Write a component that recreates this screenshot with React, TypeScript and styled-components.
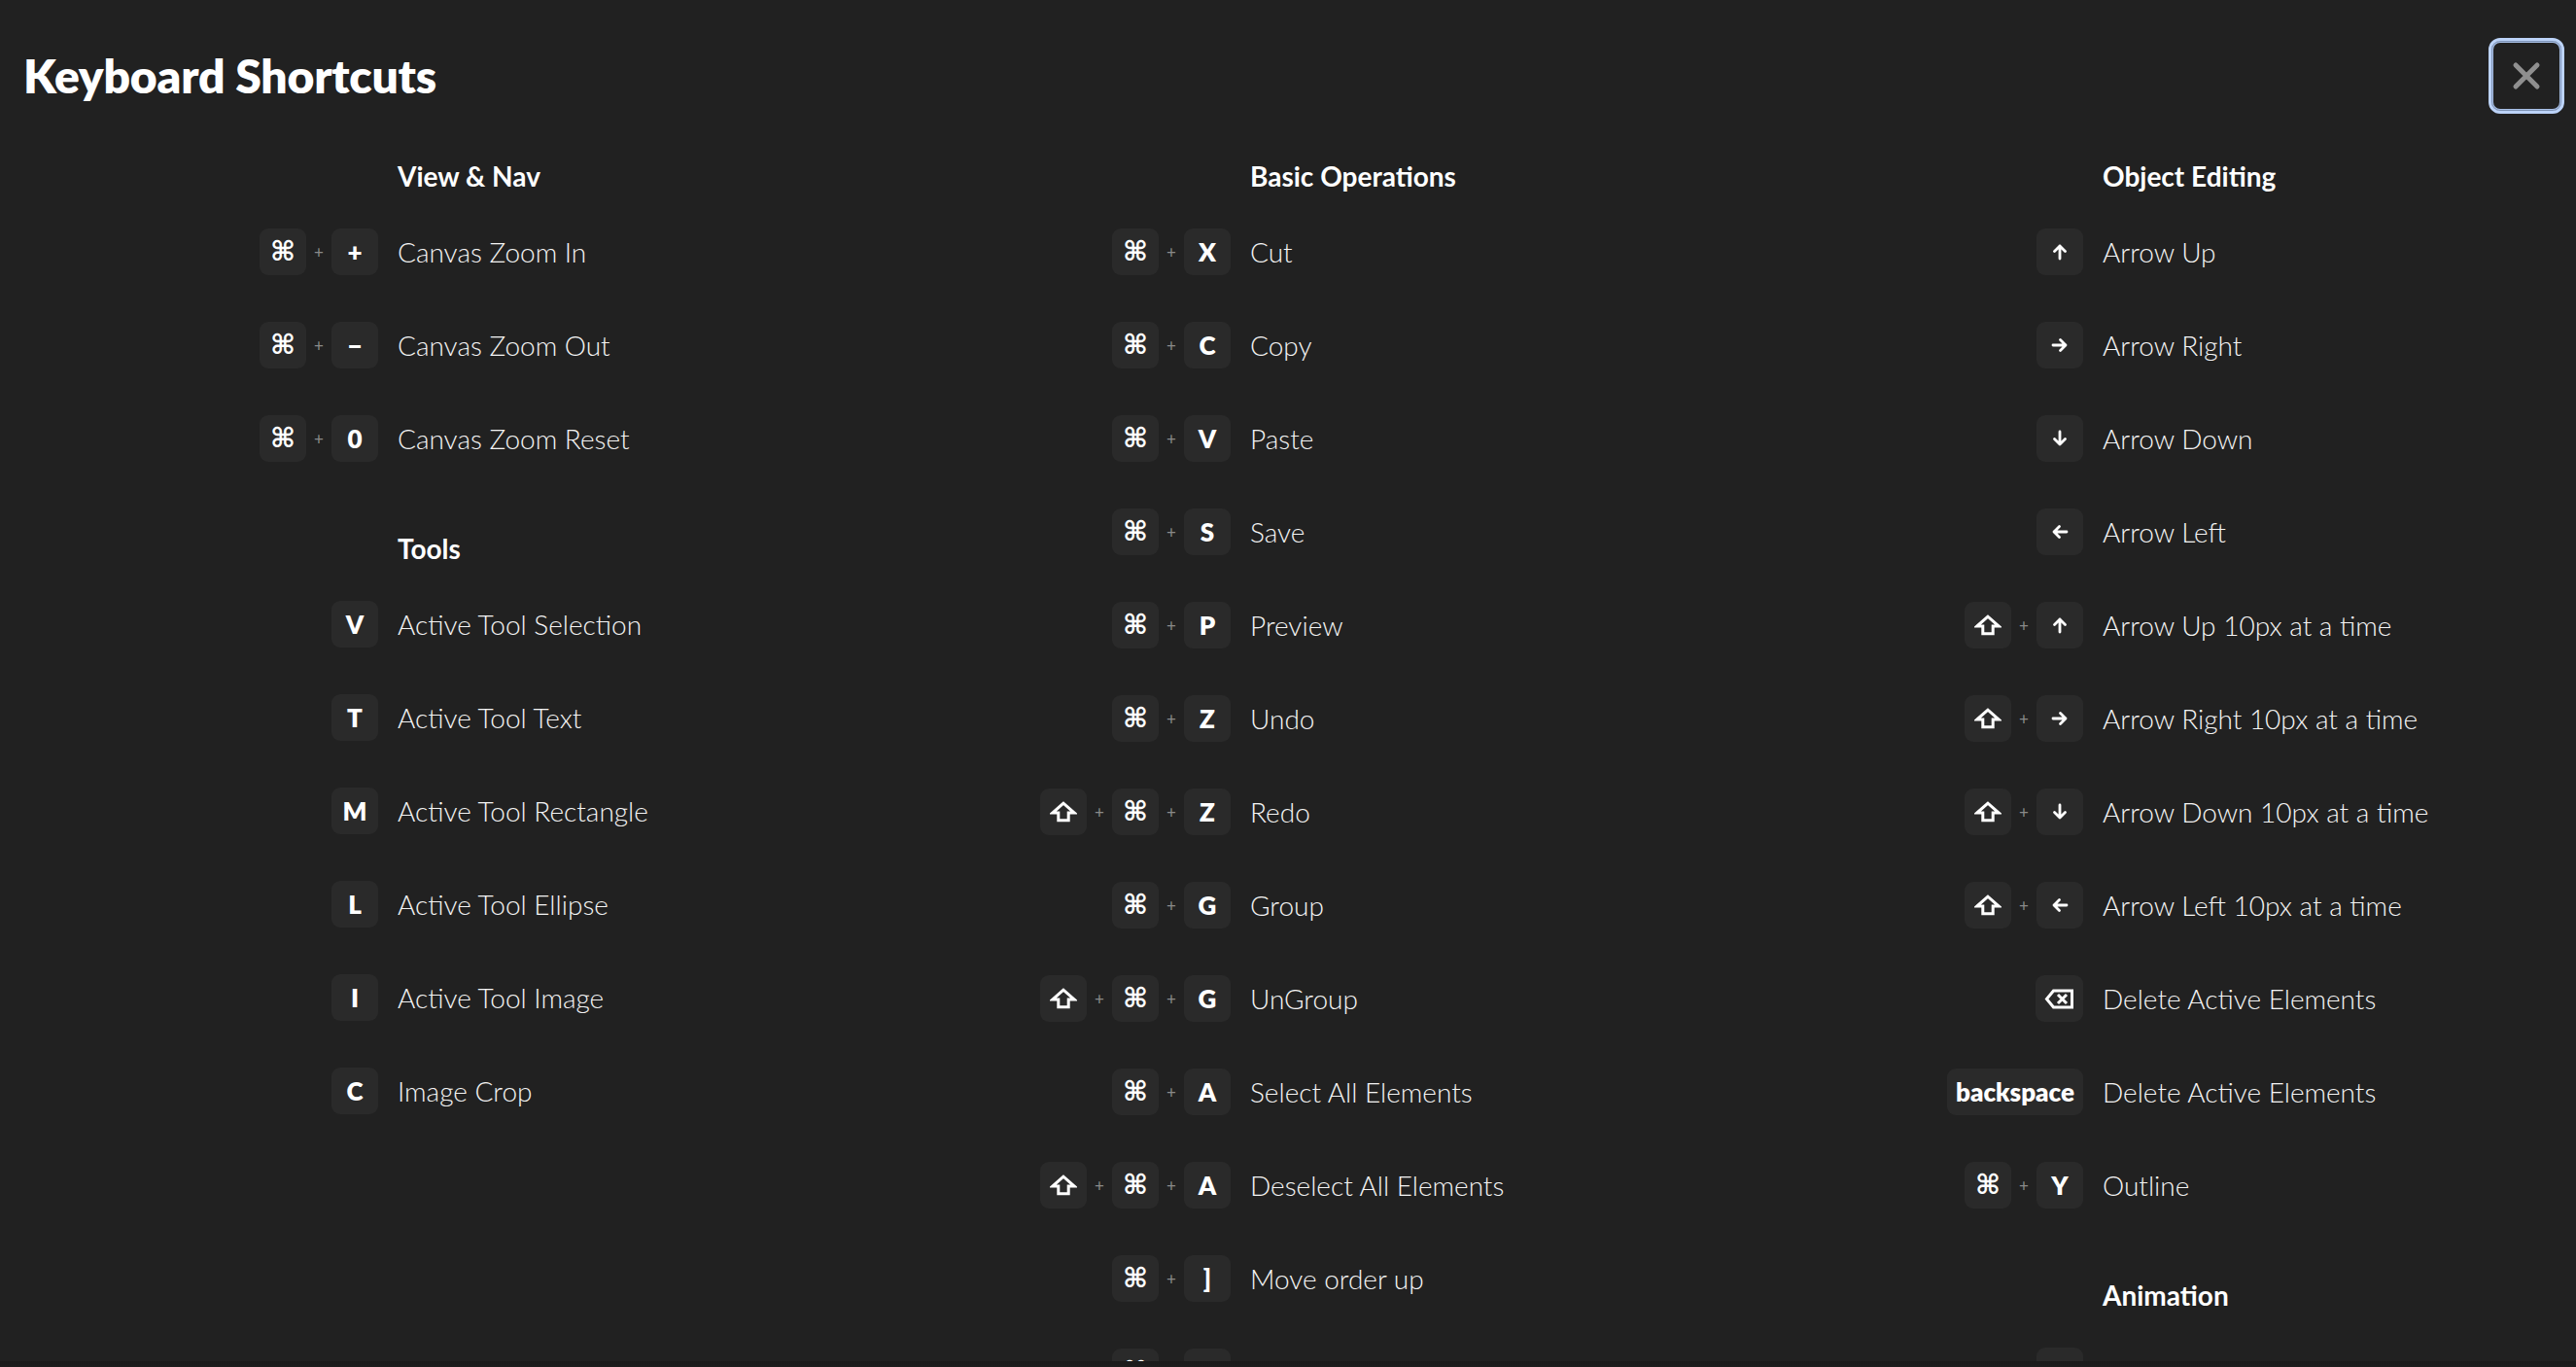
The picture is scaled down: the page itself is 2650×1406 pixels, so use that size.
import React from "react";
import styled, { createGlobalStyle } from "styled-components";

const GlobalStyle = createGlobalStyle`
  html, body {
    margin: 0;
    padding: 0;
    background: #212121;
    overflow: hidden;
  }
  * { box-sizing: border-box; }
`;

const Page = styled.div`
  width: 2650px;
  height: 1406px;
  background: #212121;
  font-family: Lato, "Noto Sans", sans-serif;
  color: #ffffff;
  display: flex;
  flex-direction: column;
`;

const Modal = styled.div`
  height: 1400px;
  overflow: hidden;
  display: flex;
  flex-direction: column;
`;

const BottomEdge = styled.div`
  height: 6px;
  background: linear-gradient(#1a1a1a, #1d1d1d);
`;

const Header = styled.header`
  display: flex;
  align-items: center;
  justify-content: space-between;
  padding: 39px 12px 0 24px;
`;

const Title = styled.h1`
  margin: 0;
  font-size: 48px;
  font-weight: 800;
  letter-spacing: -0.2px;
  line-height: 78px;
  color: #ffffff;
`;

const CloseButton = styled.button`
  width: 78px;
  height: 78px;
  border-radius: 12px;
  border: 3px solid #bcd3f8;
  box-shadow: inset 0 0 0 1px #7d92b5, inset 0 0 0 2px #a9c0e6;
  background: transparent;
  display: flex;
  align-items: center;
  justify-content: center;
  padding: 0;
  cursor: pointer;
`;

const Columns = styled.div`
  display: grid;
  grid-template-columns: repeat(3, 877px);
  padding-left: 20px;
  margin-top: 44px;
`;

const Column = styled.div`
  display: flex;
  flex-direction: column;
`;

const Section = styled.section`
  display: flex;
  flex-direction: column;
  & + & {
    margin-top: 45px;
  }
`;

const SectionTitle = styled.h2`
  margin: 0 0 10px 389px;
  height: 40px;
  line-height: 40px;
  font-size: 28px;
  font-weight: 700;
  color: #ffffff;
`;

const Row = styled.div`
  display: grid;
  grid-template-columns: 369px 1fr;
  column-gap: 20px;
  align-items: center;
  height: 96px;
`;

const Keys = styled.div`
  display: flex;
  justify-content: flex-end;
  align-items: center;
`;

const Key = styled.span<{ $wide?: boolean }>`
  min-width: 48px;
  height: 48px;
  padding: 0 ${(p) => (p.$wide ? "9px" : "0")};
  border-radius: 9px;
  background: #2a2a2a;
  display: inline-flex;
  align-items: center;
  justify-content: center;
  font-family: Lato, "Noto Sans", sans-serif;
  font-size: 26px;
  font-weight: 800;
  color: #ffffff;
  line-height: 1;
`;

const CmdGlyph = styled.span`
  font-family: "DejaVu Sans", sans-serif;
  font-weight: 700;
  font-size: 28px;
  line-height: 1;
`;

const Plus = styled.span`
  width: 26px;
  text-align: center;
  font-size: 17px;
  font-weight: 400;
  color: #8a8a8a;
`;

const Label = styled.span`
  font-size: 28px;
  font-weight: 300;
  color: #f4f4f4;
  white-space: nowrap;
`;

const ShiftIcon = () => (
  <svg width="28" height="22" viewBox="0 0 28 22" fill="none">
    <path
      d="M14 2.2 L2.8 12 H8.8 V19.8 H19.2 V12 H25.2 Z"
      stroke="#fff"
      strokeWidth="3"
      strokeLinejoin="miter"
    />
  </svg>
);

const ArrowIcon = ({ dir }: { dir: "up" | "right" | "down" | "left" }) => {
  const rot = { up: 0, right: 90, down: 180, left: 270 }[dir];
  return (
    <svg width="18" height="18" viewBox="0 0 18 18" fill="none">
      <g transform={`rotate(${rot} 9 9)`}>
        <path
          d="M9 16 V3 M3.5 8.5 L9 3 L14.5 8.5"
          stroke="#fff"
          strokeWidth="2.8"
          strokeLinecap="round"
          strokeLinejoin="round"
        />
      </g>
    </svg>
  );
};

const DeleteIcon = () => (
  <svg width="31" height="21" viewBox="0 0 31 21" fill="none">
    <path
      d="M9.5 2 H28.5 V19 H9.5 L2.5 10.5 Z"
      stroke="#fff"
      strokeWidth="3"
      strokeLinejoin="miter"
    />
    <path d="M14 6 L23 15 M23 6 L14 15" stroke="#fff" strokeWidth="3" />
  </svg>
);

const CloseIcon = () => (
  <svg width="30" height="30" viewBox="0 0 30 30" fill="none">
    <path
      d="M4 4 L26 26 M26 4 L4 26"
      stroke="#8f8f8f"
      strokeWidth="5"
      strokeLinecap="round"
    />
  </svg>
);

type Shortcut = { keys: string[]; label: string };
type SectionData = { title: string; rows: Shortcut[] };

const renderKey = (k: string) => {
  switch (k) {
    case "cmd":
      return (
        <Key>
          <CmdGlyph>⌘</CmdGlyph>
        </Key>
      );
    case "shift":
      return (
        <Key $wide>
          <ShiftIcon />
        </Key>
      );
    case "up":
    case "right":
    case "down":
    case "left":
      return (
        <Key>
          <ArrowIcon dir={k} />
        </Key>
      );
    case "del":
      return (
        <Key $wide>
          <DeleteIcon />
        </Key>
      );
    default:
      return <Key $wide={k.length > 1}>{k}</Key>;
  }
};

const columns: SectionData[][] = [
  [
    {
      title: "View & Nav",
      rows: [
        { keys: ["cmd", "+"], label: "Canvas Zoom In" },
        { keys: ["cmd", "−"], label: "Canvas Zoom Out" },
        { keys: ["cmd", "0"], label: "Canvas Zoom Reset" },
      ],
    },
    {
      title: "Tools",
      rows: [
        { keys: ["V"], label: "Active Tool Selection" },
        { keys: ["T"], label: "Active Tool Text" },
        { keys: ["M"], label: "Active Tool Rectangle" },
        { keys: ["L"], label: "Active Tool Ellipse" },
        { keys: ["I"], label: "Active Tool Image" },
        { keys: ["C"], label: "Image Crop" },
      ],
    },
  ],
  [
    {
      title: "Basic Operations",
      rows: [
        { keys: ["cmd", "X"], label: "Cut" },
        { keys: ["cmd", "C"], label: "Copy" },
        { keys: ["cmd", "V"], label: "Paste" },
        { keys: ["cmd", "S"], label: "Save" },
        { keys: ["cmd", "P"], label: "Preview" },
        { keys: ["cmd", "Z"], label: "Undo" },
        { keys: ["shift", "cmd", "Z"], label: "Redo" },
        { keys: ["cmd", "G"], label: "Group" },
        { keys: ["shift", "cmd", "G"], label: "UnGroup" },
        { keys: ["cmd", "A"], label: "Select All Elements" },
        { keys: ["shift", "cmd", "A"], label: "Deselect All Elements" },
        { keys: ["cmd", "]"], label: "Move order up" },
        { keys: ["cmd", "["], label: "Move order down" },
      ],
    },
  ],
  [
    {
      title: "Object Editing",
      rows: [
        { keys: ["up"], label: "Arrow Up" },
        { keys: ["right"], label: "Arrow Right" },
        { keys: ["down"], label: "Arrow Down" },
        { keys: ["left"], label: "Arrow Left" },
        { keys: ["shift", "up"], label: "Arrow Up 10px at a time" },
        { keys: ["shift", "right"], label: "Arrow Right 10px at a time" },
        { keys: ["shift", "down"], label: "Arrow Down 10px at a time" },
        { keys: ["shift", "left"], label: "Arrow Left 10px at a time" },
        { keys: ["del"], label: "Delete Active Elements" },
        { keys: ["backspace"], label: "Delete Active Elements" },
        { keys: ["cmd", "Y"], label: "Outline" },
      ],
    },
    {
      title: "Animation",
      rows: [{ keys: ["K"], label: "Play timeline" }],
    },
  ],
];

export default function App() {
  return (
    <Page>
      <GlobalStyle />
      <Modal>
        <Header>
          <Title>Keyboard Shortcuts</Title>
          <CloseButton aria-label="Close">
            <CloseIcon />
          </CloseButton>
        </Header>
        <Columns>
          {columns.map((sections, ci) => (
            <Column key={ci}>
              {sections.map((s) => (
                <Section key={s.title}>
                  <SectionTitle>{s.title}</SectionTitle>
                  {s.rows.map((r, ri) => (
                    <Row key={ri}>
                      <Keys>
                        {r.keys.map((k, ki) => (
                          <React.Fragment key={ki}>
                            {ki > 0 && <Plus>+</Plus>}
                            {renderKey(k)}
                          </React.Fragment>
                        ))}
                      </Keys>
                      <Label>{r.label}</Label>
                    </Row>
                  ))}
                </Section>
              ))}
            </Column>
          ))}
        </Columns>
      </Modal>
      <BottomEdge />
    </Page>
  );
}
